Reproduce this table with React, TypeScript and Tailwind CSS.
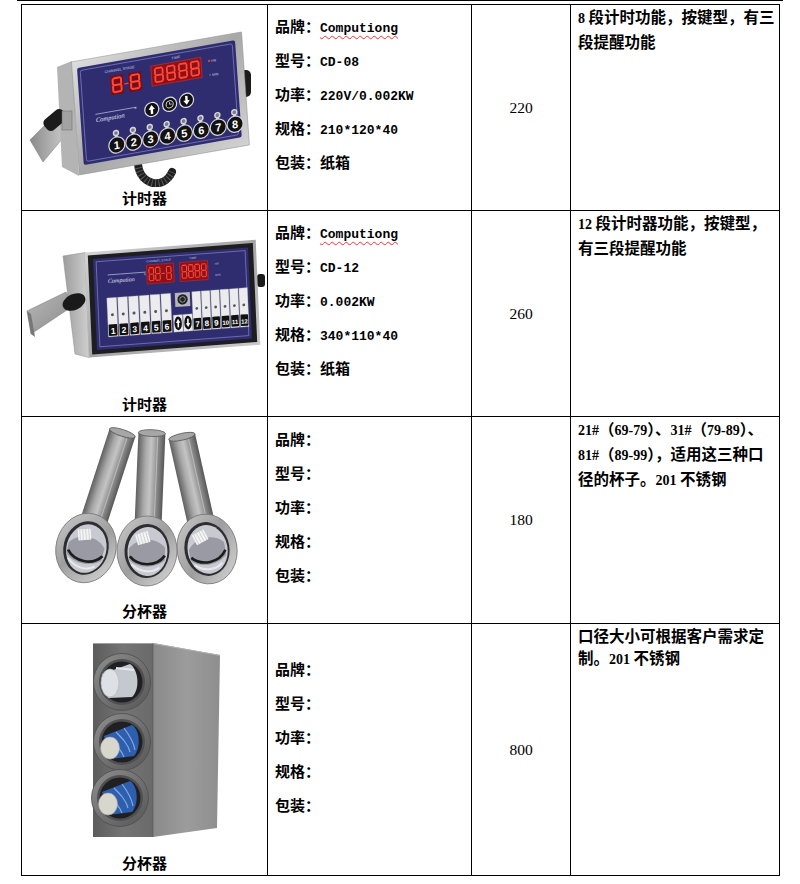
import React from 'react';

// ---------- small helpers ----------
const Mixed = ({ text, latin }: { text: string; latin: string }) => (
  <>
    {text.split(/([\x20-\x7E]+)/).map((part, i) =>
      /^[\x20-\x7E]+$/.test(part) ? (
        <span key={i} className={latin}>
          {part}
        </span>
      ) : (
        <span key={i}>{part}</span>
      )
    )}
  </>
);

const Digit = ({ x, y, w, h, c = '#ff4a3a' }: { x: number; y: number; w: number; h: number; c?: string }) => (
  <path
    d={`M${x + w * 0.22} ${y + h * 0.07} H${x + w * 0.78} M${x + w * 0.22} ${y + h / 2} H${x + w * 0.78} M${x + w * 0.22} ${y + h * 0.93} H${x + w * 0.78} M${x + w * 0.12} ${y + h * 0.14} V${y + h * 0.43} M${x + w * 0.88} ${y + h * 0.14} V${y + h * 0.43} M${x + w * 0.12} ${y + h * 0.57} V${y + h * 0.86} M${x + w * 0.88} ${y + h * 0.57} V${y + h * 0.86}`}
    stroke={c}
    strokeWidth={w * 0.18}
    strokeLinecap="round"
    fill="none"
  />
);

// ---------- product pictures ----------
const TimerEight = () => (
  <svg width="245" height="182" viewBox="22 5 245 182" className="block">
    <defs>
      <linearGradient id="t1steel" x1="0" y1="0" x2="1" y2="1">
        <stop offset="0" stopColor="#dedede" />
        <stop offset="0.5" stopColor="#a8a8a8" />
        <stop offset="1" stopColor="#d2d2d2" />
      </linearGradient>
      <linearGradient id="t1plate" x1="0" y1="0" x2="1" y2="0">
        <stop offset="0" stopColor="#8a8a8a" />
        <stop offset="1" stopColor="#d6d6d6" />
      </linearGradient>
    </defs>
    {/* cable */}
    <path d="M138 164 C140 186 164 190 172 172" fill="none" stroke="#1f1f1f" strokeWidth="8" strokeLinecap="round" />
    <path d="M138 164 C140 186 164 190 172 172" fill="none" stroke="#5a5a5a" strokeWidth="8" strokeDasharray="1 2.5" />
    {/* right knob */}
    <rect x="238" y="70" width="13" height="27" rx="5" fill="#1b1b1b" />
    {/* stand */}
    <polygon points="30,140 58,112 72,127 43,162" fill="url(#t1plate)" stroke="#777" strokeWidth="0.5" />
    <polygon points="57,67 72,61 79,176 62,167" fill="#b4b4b4" />
    <g transform="translate(55 120) rotate(-40)">
      <rect x="-12" y="-7" width="24" height="14" rx="5" fill="#1c1c1c" />
    </g>
    <rect x="62" y="111" width="10" height="19" fill="#a2a2a2" stroke="#6a6a6a" strokeWidth="0.5" />
    {/* front */}
    <g transform="matrix(1 -0.176 0.07 1 77 68)">
      <rect x="-5" y="-7" width="170" height="113" fill="url(#t1steel)" stroke="#8a8a8a" strokeWidth="0.5" />
      <rect x="0" y="0" width="158" height="97" rx="2" fill="#2f2d70" />
      <rect x="3" y="3" width="152" height="91" rx="2" fill="none" stroke="#9391cc" strokeWidth="0.6" />
      <text x="27" y="10" fontSize="3.6" fill="#c8c8ea" fontFamily="Liberation Sans">CHANNEL  STAGE</text>
      <rect x="32" y="14" width="13" height="19" fill="#7c0c12" />
      <Digit x={33} y={15.5} w={11} h={16} />
      <line x1="45.5" y1="24" x2="50" y2="24" stroke="#ff4a3a" strokeWidth="1.2" />
      <rect x="50" y="14" width="13" height="19" fill="#7c0c12" />
      <Digit x={51} y={15.5} w={11} h={16} />
      <text x="94" y="8" fontSize="3.6" fill="#c8c8ea" fontFamily="Liberation Sans">TIME</text>
      <rect x="73" y="11" width="50" height="20" fill="#8f1016" stroke="#d03030" strokeWidth="0.6" />
      {[75.5, 87.5, 99.5, 111.5].map((dx) => (
        <Digit key={dx} x={dx} y={13} w={10} h={16} />
      ))}
      <circle cx="131" cy="16" r="1.1" fill="#ff3a2a" />
      <text x="133" y="17.5" fontSize="3.4" fill="#c8c8ea" fontFamily="Liberation Sans">HR</text>
      <circle cx="131" cy="30" r="1.1" fill="#55557a" />
      <text x="133" y="31.5" fontSize="3.4" fill="#c8c8ea" fontFamily="Liberation Sans">MIN</text>
      {/* logo */}
      <line x1="15" y1="49" x2="56" y2="49" stroke="#d8d8ee" strokeWidth="0.6" />
      <text x="15" y="57" fontSize="6.5" fontStyle="italic" fill="#e4e4f4" fontFamily="Liberation Serif">Compution</text>
      <text x="54" y="51" fontSize="2.8" fill="#e4e4f4" fontFamily="Liberation Sans">®</text>
      {/* up / clock / down */}
      {[
        [71, 54],
        [89, 52],
        [106, 51],
      ].map(([cx, cy]) => (
        <g key={cx}>
          <circle cx={cx} cy={cy} r="7.6" fill="#dcdce4" />
          <circle cx={cx} cy={cy} r="6.4" fill="#111" />
        </g>
      ))}
      <path d="M71 49.5 L74.2 54 H72.2 V58.5 H69.8 V54 H67.8 Z" fill="#fff" />
      <circle cx="89" cy="52" r="3.6" fill="none" stroke="#e0e0e0" strokeWidth="0.9" />
      <path d="M89 49.8 V52 H91" fill="none" stroke="#e0e0e0" strokeWidth="0.8" />
      <path d="M106 55.5 L102.8 51 H104.8 V46.5 H107.2 V51 H109.2 Z" fill="#fff" />
      {/* channel keys */}
      {[1, 2, 3, 4, 5, 6, 7, 8].map((n, i) => {
        const x = 34 + i * 16.9;
        return (
          <g key={n}>
            <circle cx={x} cy={71} r={3.2} fill="#d6d6de" />
            <rect x={x - 1.5} y={71} width={3} height={5} fill="#d6d6de" />
            <circle cx={x} cy={83} r={8.6} fill="#d6d6de" />
            <circle cx={x} cy={83} r={7.4} fill="#111" />
            <circle cx={x} cy={71} r={1.8} fill="#7a7a82" />
            <text x={x} y={87} textAnchor="middle" fontSize="11" fontWeight="700" fill="#fff" fontFamily="Liberation Sans">
              {n}
            </text>
          </g>
        );
      })}
    </g>
  </svg>
);

const TimerTwelve = () => {
  const left = [0, 1, 2, 3, 4, 5].map((i) => 12 + i * 10.8);
  const right = [0, 1, 2, 3, 4, 5].map((i) => 97 + i * 9.4);
  return (
    <svg width="245" height="180" viewBox="22 211 245 180" className="block">
      <defs>
        <linearGradient id="t2steel" x1="0" y1="0" x2="1" y2="1">
          <stop offset="0" stopColor="#d4d4d4" />
          <stop offset="0.5" stopColor="#a4a4a4" />
          <stop offset="1" stopColor="#cacaca" />
        </linearGradient>
        <linearGradient id="t2side" x1="0" y1="0" x2="1" y2="0">
          <stop offset="0" stopColor="#9c9c9c" />
          <stop offset="1" stopColor="#d0d0d0" />
        </linearGradient>
        <linearGradient id="t2plate" x1="0" y1="0" x2="1" y2="1">
          <stop offset="0" stopColor="#b8b8b8" />
          <stop offset="1" stopColor="#8a8a8a" />
        </linearGradient>
      </defs>
      <rect x="257" y="274" width="8" height="13" rx="3" fill="#1a1a1a" />
      <polygon points="63,256 85,252.6 89.3,357.6 75,354" fill="url(#t2side)" stroke="#8a8a8a" strokeWidth="0.5" />
      <polygon points="27,311 66,292 73,306 31,334" fill="url(#t2plate)" stroke="#777" strokeWidth="0.5" />
      <polygon points="27,311 31,334 35,337 31,314" fill="#777" />
      <ellipse cx="74" cy="302" rx="12" ry="8" transform="rotate(-25 74 302)" fill="#1a1a1a" />
      <g transform="matrix(1 -0.075 0.044 1 93 259)">
        <rect x="-8" y="-7" width="171" height="105" fill="url(#t2steel)" />
        <rect x="-5" y="-4" width="165" height="99" fill="#1d1d22" />
        <rect x="0" y="0" width="155" height="91" fill="#2f2d70" />
        <rect x="3" y="3" width="149" height="85" fill="none" stroke="#9391cc" strokeWidth="0.6" />
        <line x1="14" y1="17" x2="52" y2="17" stroke="#d8d8ee" strokeWidth="0.6" />
        <text x="14" y="25" fontSize="6" fontStyle="italic" fill="#e4e4f4" fontFamily="Liberation Serif">Compution</text>
        <text x="50" y="20" fontSize="2.6" fill="#e4e4f4" fontFamily="Liberation Sans">®</text>
        <text x="53" y="7.5" fontSize="3" fill="#c8c8ea" fontFamily="Liberation Sans">CHANNEL  STAGE</text>
        <text x="96" y="7.5" fontSize="3" fill="#c8c8ea" fontFamily="Liberation Sans">TIME</text>
        <rect x="53" y="10" width="27" height="19" fill="#8f1016" stroke="#d03030" strokeWidth="0.5" />
        <Digit x={54.5} y={12} w={6} h={15} />
        <Digit x={61} y={12} w={6} h={15} />
        <line x1="67.5" y1="19.5" x2="71" y2="19.5" stroke="#ff4a3a" strokeWidth="1" />
        <Digit x={72} y={12} w={6} h={15} />
        <rect x="86" y="10" width="28" height="19" fill="#8f1016" stroke="#d03030" strokeWidth="0.5" />
        {[87.5, 94, 100.5, 107].map((dx) => (
          <Digit key={dx} x={dx} y={12} w={6} h={15} />
        ))}
        <text x="121" y="15" fontSize="3" fill="#b8b8d8" fontFamily="Liberation Sans">HR</text>
        <text x="121" y="26" fontSize="3" fill="#b8b8d8" fontFamily="Liberation Sans">MIN</text>
        <rect x="80" y="40" width="15" height="14" fill="#b4b4bc" />
        <circle cx="87.5" cy="47" r="5.5" fill="#222" stroke="#ddd" strokeWidth="0.5" />
        <circle cx="87.5" cy="47" r="2.8" fill="none" stroke="#ccc" strokeWidth="0.6" />
        {left.map((x, i) => (
          <g key={x}>
            <rect x={x} y="40" width="9.8" height="39" fill="#ececee" stroke="#9a9a9a" strokeWidth="0.3" />
            <circle cx={x + 4.9} cy="57" r="1.5" fill="#55555a" />
            <rect x={x + 0.6} y="66.5" width="8.6" height="11.5" rx="0.8" fill="#111" />
            <text x={x + 4.9} y="76" textAnchor="middle" fontSize="8.5" fontWeight="700" fill="#fff" fontFamily="Liberation Sans">
              {i + 1}
            </text>
          </g>
        ))}
        {[77.5, 87.3].map((x, i) => (
          <g key={x}>
            <rect x={x} y="62" width="9.2" height="17" fill="#ececee" stroke="#9a9a9a" strokeWidth="0.3" />
            <ellipse cx={x + 4.6} cy="70.5" rx="3.7" ry="6.8" fill="#111" />
            <path
              d={
                i === 0
                  ? `M${x + 4.6} 66 L${x + 6.8} 70 H${x + 5.4} V74.5 H${x + 3.8} V70 H${x + 2.4} Z`
                  : `M${x + 4.6} 75 L${x + 6.8} 71 H${x + 5.4} V66.5 H${x + 3.8} V71 H${x + 2.4} Z`
              }
              fill="#fff"
            />
          </g>
        ))}
        {right.map((x, i) => (
          <g key={x}>
            <rect x={x} y="40" width="8.6" height="39" fill="#ececee" stroke="#9a9a9a" strokeWidth="0.3" />
            <circle cx={x + 4.3} cy="57" r="1.4" fill="#55555a" />
            <rect x={x + 0.5} y="66.5" width="7.6" height="11.5" rx="0.8" fill="#111" />
            <text
              x={x + 4.3}
              y="75.5"
              textAnchor="middle"
              fontSize={i + 7 > 9 ? 6 : 8}
              fontWeight="700"
              fill="#fff"
              fontFamily="Liberation Sans"
            >
              {i + 7}
            </text>
          </g>
        ))}
      </g>
    </svg>
  );
};

const Tube = ({ cx, cy, rot, len }: { cx: number; cy: number; rot: number; len: number }) => (
  <g transform={`translate(${cx} ${cy}) rotate(${rot})`}>
    <rect x="-13.5" y={-len} width="27" height={len} fill="url(#tubeG)" />
    <line x1="6" y1={-len + 4} x2="6" y2="-30" stroke="#e2e2e2" strokeWidth="1" opacity="0.5" />
    <ellipse cx="0" cy={-len} rx="13.5" ry="3.4" fill="#a6a6a6" stroke="#5a5a5a" strokeWidth="0.8" />
  </g>
);

const Flange = ({ cx, cy, rot }: { cx: number; cy: number; rot: number }) => (
  <g transform={`translate(${cx} ${cy}) rotate(${rot})`}>
    <ellipse rx="30" ry="35" fill="url(#flangeG)" stroke="#767676" strokeWidth="0.8" />
    <ellipse rx="22.5" ry="27" fill="#2e2e32" />
    <ellipse cx="0.5" cy="0.5" rx="20" ry="24.5" fill="#c9c9d1" />
    <path d="M-18 -2 C-10 -13 8 -15 18 -4 L18 9 C8 18 -10 18 -18 9 Z" fill="#9a9aa4" />
    <g transform="rotate(-18)">
      <rect x="-7" y="-19" width="13" height="11" fill="#f4f4f4" />
      <path d="M-5 -19 V-8 M-2 -19 V-8 M1 -19 V-8 M4 -19 V-8" stroke="#b4b4bc" strokeWidth="0.5" />
    </g>
    <path d="M-17 6 C-8 16 10 16 18 4" fill="none" stroke="#1c1c1c" strokeWidth="2.6" />
    <path d="M-15 14 C-6 22 6 22 13 16" fill="none" stroke="#e8e8ee" strokeWidth="2" />
  </g>
);

const CupTubes = () => (
  <svg width="245" height="180" viewBox="22 417 245 180" className="block">
    <defs>
      <linearGradient id="tubeG" x1="0" y1="0" x2="1" y2="0">
        <stop offset="0" stopColor="#5f5f5f" />
        <stop offset="0.3" stopColor="#a9a9a9" />
        <stop offset="0.5" stopColor="#c4c4c4" />
        <stop offset="0.75" stopColor="#8d8d8d" />
        <stop offset="1" stopColor="#575757" />
      </linearGradient>
      <linearGradient id="flangeG" x1="0" y1="0" x2="1" y2="1">
        <stop offset="0" stopColor="#cacaca" />
        <stop offset="0.5" stopColor="#9e9e9e" />
        <stop offset="1" stopColor="#dadada" />
      </linearGradient>
    </defs>
    <Tube cx={85} cy={548} rot={18} len={121} />
    <Tube cx={147} cy={550} rot={2.4} len={117} />
    <Tube cx={207} cy={549} rot={-12.6} len={115} />
    <Flange cx={86} cy={548} rot={14} />
    <Flange cx={207} cy={549} rot={-10} />
    <Flange cx={147} cy={551} rot={2} />
  </svg>
);

const Hole = ({ cx, cy, blue }: { cx: number; cy: number; blue: boolean }) => (
  <g transform={`translate(${cx} ${cy})`}>
    <circle r="28.5" fill="url(#ring4)" stroke="#4e4e4e" strokeWidth="0.8" />
    <circle r="23" fill="#505052" />
    <circle r="20.5" fill="#202022" />
    {blue ? (
      <>
        <path d="M-18 -6 L10 -17 C18 -12 19 6 12 14 L-12 17 Z" fill="#2d5fae" />
        <path d="M-6 -10 C0 -4 6 2 8 10 M2 -14 C8 -6 12 2 13 8 M-12 -2 C-4 4 0 10 2 15" fill="none" stroke="#86a8e0" strokeWidth="1.2" />
        <ellipse cx="-12" cy="6" rx="9.5" ry="11" fill="#d8d7ce" stroke="#a9a9a0" strokeWidth="0.6" />
      </>
    ) : (
      <>
        <path d="M-20 -8 L8 -18 C17 -12 18 8 10 15 L-14 16 Z" fill="#c4c9cf" />
        <path d="M-6 -14 L12 -12" stroke="#e6e9ec" strokeWidth="2" />
        <ellipse cx="-12" cy="1" rx="9" ry="14" fill="#dde1e5" stroke="#b0b4b8" strokeWidth="0.6" />
      </>
    )}
  </g>
);

const CupBox = () => (
  <svg width="245" height="220" viewBox="22 624 245 220" className="block">
    <defs>
      <linearGradient id="side4" x1="0" y1="0" x2="1" y2="0">
        <stop offset="0" stopColor="#8a8a8a" />
        <stop offset="0.5" stopColor="#9c9c9c" />
        <stop offset="1" stopColor="#8e8e8e" />
      </linearGradient>
      <linearGradient id="front4" x1="0" y1="0" x2="1" y2="0">
        <stop offset="0" stopColor="#5c5c5c" />
        <stop offset="0.5" stopColor="#747474" />
        <stop offset="1" stopColor="#6a6a6a" />
      </linearGradient>
      <linearGradient id="ring4" x1="0" y1="0" x2="1" y2="1">
        <stop offset="0" stopColor="#8e8e8e" />
        <stop offset="1" stopColor="#565656" />
      </linearGradient>
    </defs>
    <polygon points="153,643 220,655 217,828 153,837" fill="url(#side4)" />
    <rect x="93" y="643" width="60" height="194" fill="url(#front4)" />
    <line x1="93" y1="643.5" x2="153" y2="643.5" stroke="#a0a0a0" />
    <line x1="153" y1="643.5" x2="220" y2="655.5" stroke="#b0b0b0" />
    <line x1="153" y1="643" x2="153" y2="837" stroke="#555" strokeWidth="0.6" />
    <Hole cx={122} cy={682} blue={false} />
    <Hole cx={122} cy={742} blue />
    <Hole cx={120} cy={798} blue />
  </svg>
);

// ---------- table data ----------
type Row = {
  pic: React.ReactNode;
  caption: string;
  h: string;
  pt: string;
  brand: string;
  model: string;
  power: string;
  size: string;
  pack: string;
  price: string;
  desc: string[];
};

const rows: Row[] = [
  {
    pic: <TimerEight />,
    caption: '计时器',
    h: 'h-[206px]',
    pt: 'pt-[4px]',
    brand: 'Computiong',
    model: 'CD-08',
    power: '220V/0.002KW',
    size: '210*120*40',
    pack: '纸箱',
    price: '220',
    desc: ['8 段计时功能，按键型，有三', '段提醒功能'],
  },
  {
    pic: <TimerTwelve />,
    caption: '计时器',
    h: 'h-[206px]',
    pt: 'pt-[4px]',
    brand: 'Computiong',
    model: 'CD-12',
    power: '0.002KW',
    size: '340*110*40',
    pack: '纸箱',
    price: '260',
    desc: ['12 段计时器功能，按键型，', '有三段提醒功能'],
  },
  {
    pic: <CupTubes />,
    caption: '分杯器',
    h: 'h-[207px]',
    pt: 'pt-[5px]',
    brand: '',
    model: '',
    power: '',
    size: '',
    pack: '',
    price: '180',
    desc: ['21#（69-79）、31#（79-89）、', '81#（89-99），适用这三种口', '径的杯子。201 不锈钢'],
  },
  {
    pic: <CupBox />,
    caption: '分杯器',
    h: 'h-[252px]',
    pt: 'pt-[28px]',
    brand: '',
    model: '',
    power: '',
    size: '',
    pack: '',
    price: '800',
    desc: ['口径大小可根据客户需求定', '制。201 不锈钢'],
  },
];

const monoLatin = "text-[13px] font-['Liberation_Mono',monospace]";
const serifLatin = "text-[14px] font-['Liberation_Serif',serif]";

export default function App() {
  return (
    <div className="w-[800px] h-[884px] bg-white text-black font-['Noto_Sans_CJK_SC',sans-serif]">
      <div className="ml-[17px] w-[766px] h-px bg-black" />
      <div className="mt-[3px] ml-[21px] w-[759px] grid grid-cols-[246px_204px_99px_209px] border-l border-t border-black">
        {rows.map((r, idx) => (
          <React.Fragment key={idx}>
            {/* picture + caption */}
            <div className={`${r.h} border-r border-b border-black flex flex-col`}>
              {r.pic}
              <div className="mt-auto pb-[2px] text-center text-[15px] leading-[20px] font-bold">{r.caption}</div>
            </div>

            {/* specs */}
            <div className={`${r.h} ${r.pt} pl-[7px] border-r border-b border-black text-[15px] font-bold`}>
              <div className="h-[34px] leading-[34px] whitespace-nowrap">
                品牌：
                {r.brand && (
                  <span className={`${monoLatin} underline decoration-wavy decoration-red-500 decoration-1 underline-offset-[3px]`}>
                    {r.brand}
                  </span>
                )}
              </div>
              <div className="h-[34px] leading-[34px] whitespace-nowrap">
                型号：<Mixed text={r.model} latin={monoLatin} />
              </div>
              <div className="h-[34px] leading-[34px] whitespace-nowrap">
                功率：<Mixed text={r.power} latin={monoLatin} />
              </div>
              <div className="h-[34px] leading-[34px] whitespace-nowrap">
                规格：<Mixed text={r.size} latin={monoLatin} />
              </div>
              <div className="h-[34px] leading-[34px] whitespace-nowrap">包装：{r.pack}</div>
            </div>

            {/* price */}
            <div className={`${r.h} border-r border-b border-black flex items-center justify-center text-[15.5px] font-['Liberation_Serif',serif]`}>
              {r.price}
            </div>

            {/* description */}
            <div className={`${r.h} pl-[7px] border-r border-b border-black text-[15.5px] leading-[22px] font-bold`}>
              {r.desc.map((line, i) => (
                <div key={i} className="whitespace-nowrap">
                  <Mixed text={line} latin={serifLatin} />
                </div>
              ))}
            </div>
          </React.Fragment>
        ))}
      </div>
    </div>
  );
}
